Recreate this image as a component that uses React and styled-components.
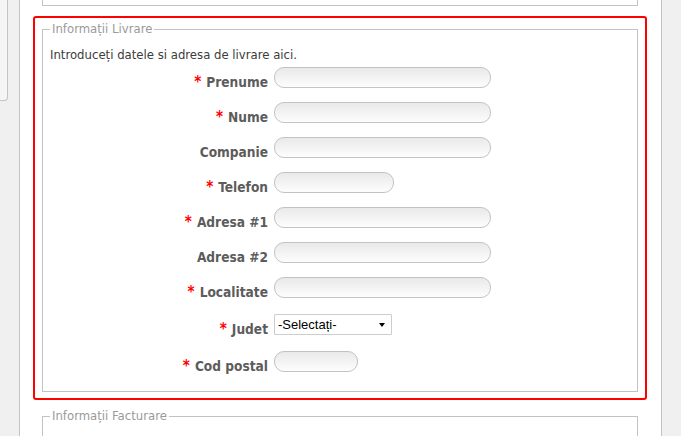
import styled, { createGlobalStyle } from 'styled-components'

const GlobalStyle = createGlobalStyle`
  html, body {
    margin: 0;
    padding: 0;
    background: #f0f0f0;
    overflow: hidden;
  }
  body {
    font-family: "DejaVu Sans Condensed", Tahoma, "DejaVu Sans", sans-serif;
  }
`

const Page = styled.div`
  display: flex;
  align-items: flex-start;
  height: 436px;
  overflow: hidden;
`

const Sidebar = styled.div`
  width: 7px;
  height: 100px;
  background: #f5f5f5;
  border-right: 1px solid #c3c3c3;
  border-bottom: 1px solid #c3c3c3;
  border-bottom-right-radius: 4px;
  flex-shrink: 0;
`

const Panel = styled.div`
  margin-left: 11px;
  width: 643px;
  height: 436px;
  background: #fff;
  border-left: 1px solid #c3c3c3;
  border-right: 1px solid #c3c3c3;
  padding: 0 23px 0 22px;
  box-sizing: border-box;
  flex-shrink: 0;
`

const PrevBox = styled.div`
  height: 5px;
  border: 1px solid #c3c3c3;
  border-top: none;
`

const Highlight = styled.div`
  margin: 10px -9px 0;
  padding: 3px 7px 6px;
  border: 2px solid #ff0000;
  border-radius: 3px;
`

const Fieldset = styled.fieldset`
  margin: ${p => (p.$next ? '8px 0 0' : '0')};
  padding: 0 7px 19px;
  border: 1px solid #c3c3c3;
  min-width: 0;
`

const Legend = styled.legend`
  padding: 0 2px;
  margin-left: 0;
  font-size: 13px;
  line-height: 16px;
  color: #9a9a9a;
`

const Intro = styled.p`
  margin: 10px 0 0;
  font-size: 13px;
  line-height: 16px;
  color: #3c3c3c;
`

const Form = styled.div`
  display: grid;
  grid-template-columns: 218px 1fr;
  column-gap: 6px;
  margin-top: 4px;
`

const Row = styled.div`
  display: contents;
`

const Label = styled.label`
  margin-top: ${p => (p.$spaced ? 16 : 14)}px;
  align-self: end;
  text-align: right;
  font-size: 13.6px;
  font-weight: bold;
  line-height: 15px;
  margin-bottom: -2px;
  color: #5c5c5c;
  white-space: nowrap;
  &:first-child {
    margin-top: 0;
  }
`

const Star = styled.span`
  color: #ff0000;
  font-size: 15px;
  margin-right: 5px;
`

const Field = styled.div`
  margin-top: ${p => (p.$spaced ? 16 : 14)}px;
  display: flex;
`

const FirstField = styled(Field)`
  margin-top: 0;
`

const Input = styled.input`
  width: ${p => p.$w}px;
  height: 21px;
  box-sizing: border-box;
  border: 1px solid #c3c3c3;
  border-radius: 10px;
  background: linear-gradient(to bottom, #e9e9e9, #fdfdfd);
  padding: 0 8px;
  outline: none;
  font-size: 12px;
`

const SelectWrap = styled.div`
  position: relative;
  width: 118px;
  height: 21px;
  &::after {
    content: '';
    position: absolute;
    right: 7px;
    top: 9px;
    border-left: 3.5px solid transparent;
    border-right: 3.5px solid transparent;
    border-top: 4px solid #000;
    pointer-events: none;
  }
`

const Select = styled.select`
  appearance: none;
  width: 100%;
  height: 100%;
  box-sizing: border-box;
  border: 1px solid #cdcdcd;
  border-radius: 1px;
  background: #fff;
  padding: 0 3px;
  font-family: "Liberation Sans", Arial, sans-serif;
  font-size: 13px;
  color: #000;
  outline: none;
`

const fields = [
  { label: 'Prenume', req: true, w: 217 },
  { label: 'Nume', req: true, w: 217 },
  { label: 'Companie', req: false, w: 217 },
  { label: 'Telefon', req: true, w: 120 },
  { label: 'Adresa #1', req: true, w: 217 },
  { label: 'Adresa #2', req: false, w: 217 },
  { label: 'Localitate', req: true, w: 217 },
]

const App = () => {
  return (
    <>
      <GlobalStyle />
      <Page>
        <Sidebar />
        <Panel>
          <PrevBox />
          <Highlight>
            <Fieldset>
              <Legend>Informații Livrare</Legend>
              <Intro>Introduceți datele si adresa de livrare aici.</Intro>
              <Form>
                {fields.map((f, i) => {
                  const F = i === 0 ? FirstField : Field
                  return (
                    <Row key={f.label}>
                      <Label>
                        {f.req && <Star>*</Star>}
                        {f.label}
                      </Label>
                      <F>
                        <Input type="text" $w={f.w} />
                      </F>
                    </Row>
                  )
                })}
                <Row>
                  <Label $spaced>
                    <Star>*</Star>Judet
                  </Label>
                  <Field $spaced>
                    <SelectWrap>
                      <Select defaultValue="">
                        <option value="">-Selectați-</option>
                      </Select>
                    </SelectWrap>
                  </Field>
                </Row>
                <Row>
                  <Label $spaced>
                    <Star>*</Star>Cod postal
                  </Label>
                  <Field $spaced>
                    <Input type="text" $w={84} />
                  </Field>
                </Row>
              </Form>
            </Fieldset>
          </Highlight>
          <Fieldset $next>
            <Legend>Informații Facturare</Legend>
            <Intro>Introduceți datele si adresa de facturare aici.</Intro>
          </Fieldset>
        </Panel>
      </Page>
    </>
  )
}

export default App
